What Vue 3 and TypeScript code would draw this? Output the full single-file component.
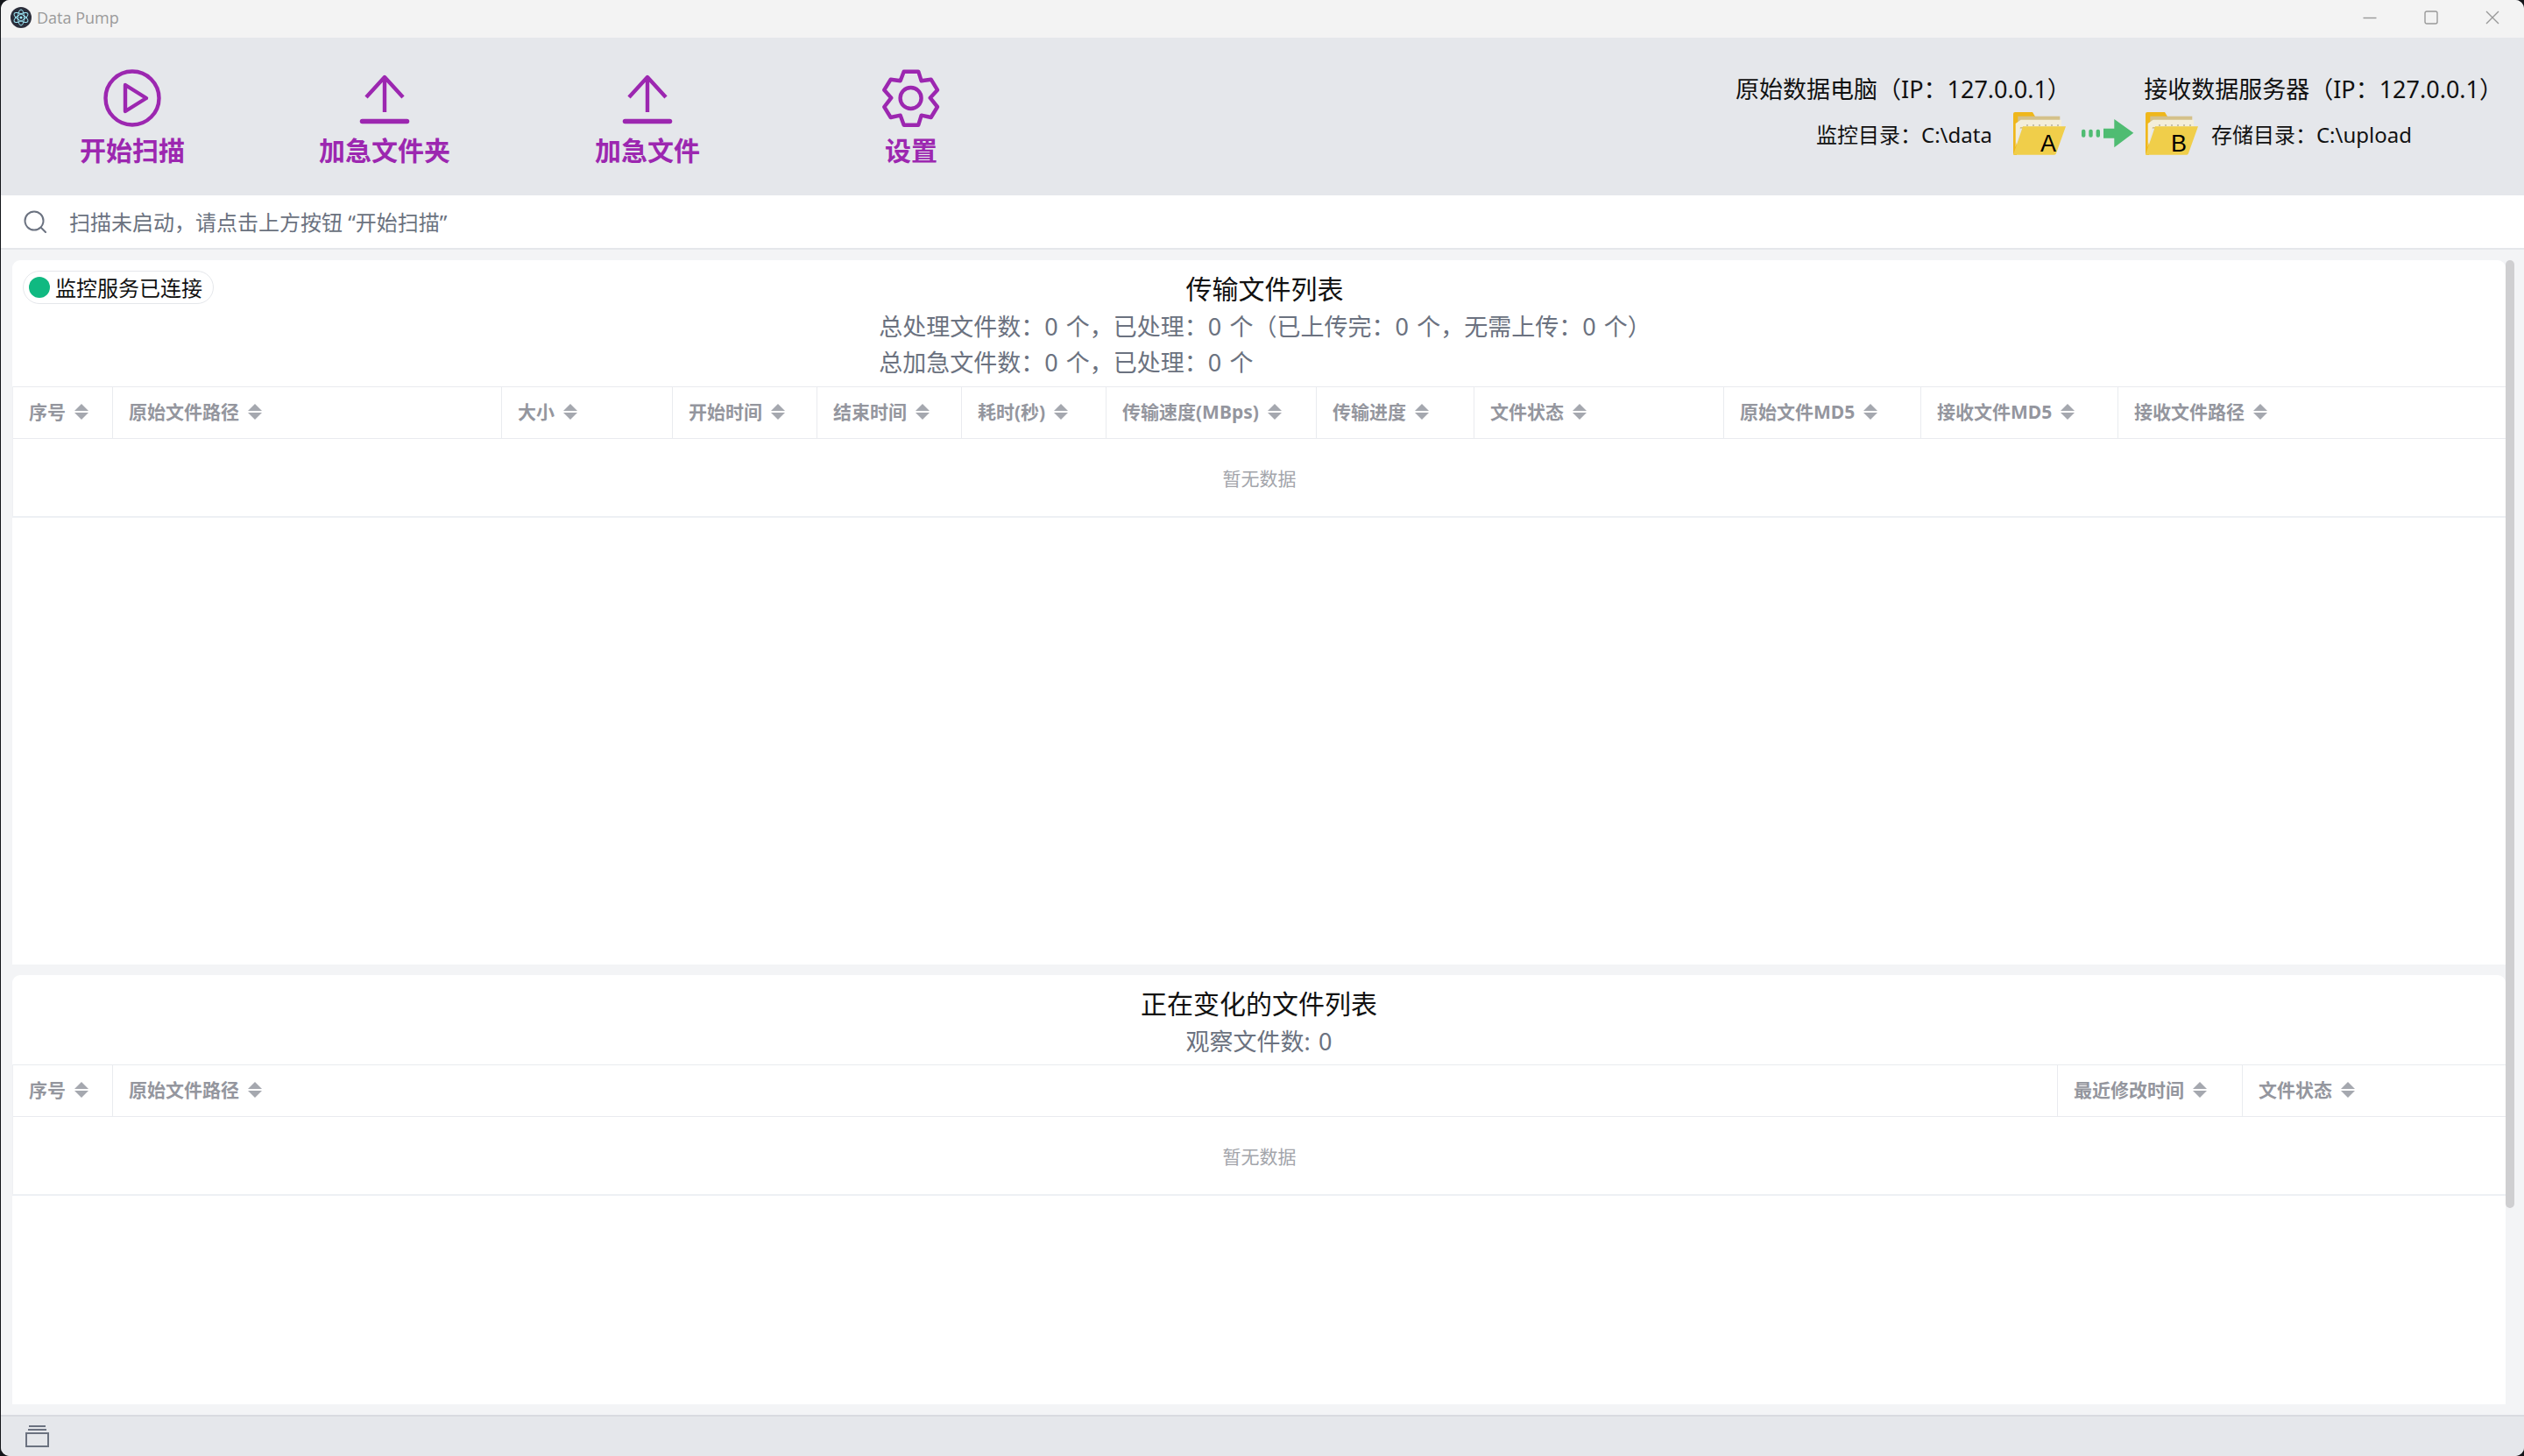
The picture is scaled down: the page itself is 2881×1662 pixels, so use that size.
<script setup lang="ts">
interface Col { label: string; width: number }

const topCols: Col[] = [
  { label: '序号', width: 114 },
  { label: '原始文件路径', width: 444 },
  { label: '大小', width: 195 },
  { label: '开始时间', width: 165 },
  { label: '结束时间', width: 165 },
  { label: '耗时(秒)', width: 165 },
  { label: '传输速度(MBps)', width: 240 },
  { label: '传输进度', width: 180 },
  { label: '文件状态', width: 285 },
  { label: '原始文件MD5', width: 225 },
  { label: '接收文件MD5', width: 225 },
  { label: '接收文件路径', width: 441 }
]

const bottomCols: Col[] = [
  { label: '序号', width: 114 },
  { label: '原始文件路径', width: 2220 },
  { label: '最近修改时间', width: 211 },
  { label: '文件状态', width: 299 }
]

const gearPoints =
  '27.7,5.7 44.3,5.7 47.7,16.3 58.7,14.7 66,26.7 57.7,35.7 66,46 58.7,58 47.7,55.7 44.3,66.7 27.7,66.7 23.7,55.7 12.7,58 5.3,46 13.3,35.7 5.3,26.7 12.7,14.7 23.7,16.3'
</script>

<template>
  <div class="screen">
    <div class="window">
      <header class="titlebar">
        <svg class="logo" viewBox="0 0 24 24">
          <circle cx="12" cy="12" r="12" fill="#2b2e3b" />
          <g fill="none" stroke="#9feaf9" stroke-width="1">
            <ellipse cx="12" cy="12" rx="9" ry="3.6" transform="rotate(30 12 12)" />
            <ellipse cx="12" cy="12" rx="9" ry="3.6" transform="rotate(90 12 12)" />
            <ellipse cx="12" cy="12" rx="9" ry="3.6" transform="rotate(150 12 12)" />
          </g>
          <circle cx="12" cy="12" r="1.6" fill="#9feaf9" />
        </svg>
        <span class="app-name">Data Pump</span>
        <div class="win-controls">
          <svg viewBox="0 0 16 16"><path d="M0.5 8.5H15.5" /></svg>
          <svg viewBox="0 0 16 16"><rect x="1" y="1" width="14" height="14" rx="2" /></svg>
          <svg viewBox="0 0 16 16"><path d="M1 1L15 15M15 1L1 15" /></svg>
        </div>
      </header>

      <section class="toolbar">
        <button class="tool tool-scan">
          <svg class="tool-icon" viewBox="0 0 72 72">
            <circle cx="36" cy="36" r="30.5" />
            <path d="M28 21L52 36L28 51Z" />
          </svg>
          <span>开始扫描</span>
        </button>
        <button class="tool tool-folder">
          <svg class="tool-icon" viewBox="0 0 72 72">
            <path d="M36 52V12M15 35L36 12L57 35" />
            <path class="bar" d="M10.5 62.5H61.5" />
          </svg>
          <span>加急文件夹</span>
        </button>
        <button class="tool tool-file">
          <svg class="tool-icon" viewBox="0 0 72 72">
            <path d="M36 52V12M15 35L36 12L57 35" />
            <path class="bar" d="M10.5 62.5H61.5" />
          </svg>
          <span>加急文件</span>
        </button>
        <button class="tool tool-settings">
          <svg class="tool-icon" viewBox="0 0 72 72">
            <polygon :points="gearPoints" />
            <circle cx="35.6" cy="36" r="12" />
          </svg>
          <span>设置</span>
        </button>

        <div class="route">
          <div class="route-hosts">
            <span>原始数据电脑（IP：127.0.0.1）</span>
            <span>接收数据服务器（IP：127.0.0.1）</span>
          </div>
          <div class="route-paths">
            <span class="path-text">监控目录：C:\data</span>
            <svg class="folder folder-a" viewBox="0 0 60 49">
              <path fill="#efb71b" d="M2 0H22L25 5H27V16H4V49H2Q0 49 0 47V2Q0 0 2 0Z" />
              <rect x="5.3" y="4.7" width="48" height="14" fill="#d4c18a" />
              <path fill="#f3eedb" d="M8.7 8.7H55V17H8L2.7 40V13Z" />
              <path stroke="#b9b39c" stroke-width="1.4" stroke-dasharray="2 5" d="M15 15H52" />
              <path fill="#f0ce4a" d="M11 16.3H60L49 47Q48.5 48.7 47 48.7H0Z" />
              <text x="40" y="45" text-anchor="middle">A</text>
            </svg>
            <svg class="arrow" viewBox="0 0 60 33">
              <rect x="0" y="11.7" width="4.4" height="9" rx="2" />
              <rect x="8.3" y="11.7" width="4.4" height="9" rx="2" />
              <rect x="16.6" y="11.7" width="4.4" height="9" rx="2" />
              <path d="M25 10.7H37.3V0L59.3 15.7L37.3 32.3V21.7H25Z" />
            </svg>
            <svg class="folder folder-b" viewBox="0 0 60 49">
              <path fill="#efb71b" d="M2 0H22L25 5H27V16H4V49H2Q0 49 0 47V2Q0 0 2 0Z" />
              <rect x="5.3" y="4.7" width="48" height="14" fill="#d4c18a" />
              <path fill="#f3eedb" d="M8.7 8.7H55V17H8L2.7 40V13Z" />
              <path stroke="#b9b39c" stroke-width="1.4" stroke-dasharray="2 5" d="M15 15H52" />
              <path fill="#f0ce4a" d="M11 16.3H60L49 47Q48.5 48.7 47 48.7H0Z" />
              <text x="38" y="45" text-anchor="middle">B</text>
            </svg>
            <span class="path-text">存储目录：C:\upload</span>
          </div>
        </div>
      </section>

      <section class="searchbar">
        <svg class="search-icon" viewBox="0 0 26 26">
          <circle cx="12" cy="12" r="10.5" />
          <path d="M20 20L25 25" />
        </svg>
        <span class="search-text">扫描未启动，请点击上方按钮 “开始扫描”</span>
      </section>

      <main class="content">
        <article class="panel panel-top">
          <div class="status-pill"><i class="dot"></i><span class="pill-text">监控服务已连接</span></div>
          <h2 class="panel-title shifted">传输文件列表</h2>
          <div class="stats stats-top">
            <p>总处理文件数：0 个，已处理：0 个（已上传完：0 个，无需上传：0 个）</p>
            <p>总加急文件数：0 个，已处理：0 个</p>
          </div>
          <div class="table">
            <div class="thead">
              <div v-for="col in topCols" :key="col.label" class="th" :style="{ width: col.width + 'px' }">
                <span class="th-label">{{ col.label }}</span>
                <span class="sorter"><i class="up"></i><i class="down"></i></span>
              </div>
            </div>
            <div class="empty">暂无数据</div>
          </div>
        </article>

        <article class="panel panel-bottom">
          <h2 class="panel-title">正在变化的文件列表</h2>
          <div class="stats"><p>观察文件数: 0</p></div>
          <div class="table">
            <div class="thead">
              <div v-for="col in bottomCols" :key="col.label" class="th" :style="{ width: col.width + 'px' }">
                <span class="th-label">{{ col.label }}</span>
                <span class="sorter"><i class="up"></i><i class="down"></i></span>
              </div>
            </div>
            <div class="empty">暂无数据</div>
          </div>
        </article>

        <div class="scroll-thumb"></div>
      </main>

      <footer class="footer">
        <svg class="footer-icon" viewBox="0 0 27 25">
          <path d="M4 1H23M3 5H24" />
          <rect x="1" y="9" width="25" height="15" />
        </svg>
      </footer>
    </div>
  </div>
</template>

<style>
html, body { margin: 0; background: #000; }
</style>

<style scoped>
.screen {
  width: 2881px;
  height: 1662px;
  background: #14161a;
  overflow: hidden;
  font-family: "Noto Sans", "Noto Sans CJK SC", sans-serif;
}
.window {
  margin-left: 1px;
  height: 1662px;
  display: flex;
  flex-direction: column;
  background: #f3f4f6;
  border-radius: 10px;
  overflow: hidden;
}
.titlebar {
  height: 43px;
  flex: none;
  box-sizing: border-box;
  display: flex;
  align-items: center;
  background: #f3f3f3;
  padding: 0 0 3px 11px;
}
.logo { width: 24px; height: 24px; margin-right: 6px; }
.app-name { font: 18px "Open Sans", sans-serif; color: #9a9a9a; }
.win-controls {
  margin-left: auto;
  display: flex;
  gap: 54px;
  padding-right: 28px;
}
.win-controls svg { width: 16px; height: 16px; fill: none; stroke: #999; stroke-width: 1.4; }

.toolbar {
  height: 180px;
  flex: none;
  display: flex;
  align-items: flex-start;
  background: #e5e7eb;
  padding: 33px 24px 0 90px;
  box-sizing: border-box;
}
.tool {
  display: flex;
  flex-direction: column;
  align-items: center;
  gap: 2px;
  border: 0;
  padding: 0;
  background: none;
  font-family: inherit;
  font-size: 30px;
  font-weight: 700;
  line-height: 44px;
  color: #9c27b0;
}
.tool-icon {
  width: 72px;
  height: 72px;
  fill: none;
  stroke: #9c27b0;
  stroke-width: 4.4;
  stroke-linejoin: round;
}
.tool-icon .bar { stroke-width: 5.5; stroke-linecap: round; }
.tool-folder { margin-left: 153px; }
.tool-file { margin-left: 165px; }
.tool-settings { margin-left: 205px; }

.route {
  margin-left: auto;
  width: 876px;
  margin-top: 6px;
  color: #111;
}
.route-hosts {
  display: flex;
  justify-content: space-between;
  font-size: 27px;
  line-height: 40px;
}
.route-paths {
  display: flex;
  justify-content: center;
  align-items: center;
  height: 50px;
  margin-top: 5px;
  padding-right: 12px;
}
.path-text { font-size: 24px; }
.folder { width: 60px; height: 49px; flex: none; overflow: visible; }
.folder text { font: 27px "Liberation Sans", sans-serif; fill: #000; }
.folder-a { margin-left: 24px; }
.folder-b { margin-right: 15px; }
.arrow { width: 60px; height: 33px; flex: none; fill: #4fbc72; margin: 0 13px 0 18px; }

.searchbar {
  height: 62px;
  flex: none;
  box-sizing: border-box;
  display: flex;
  align-items: center;
  background: #fff;
  border-bottom: 2px solid #e5e7eb;
  padding-left: 26px;
  font-size: 24px;
  color: #6b7280;
}
.search-text { margin-top: -2px; }
.search-icon {
  width: 26px;
  height: 26px;
  margin-right: 26px;
  fill: none;
  stroke: #6b7280;
  stroke-width: 2;
  stroke-linecap: round;
}

.content {
  position: relative;
  flex: 1;
  display: flex;
  flex-direction: column;
  gap: 12px;
  padding: 12px 21px 12px 13px;
  min-height: 0;
}
.panel {
  position: relative;
  box-sizing: border-box;
  background: #fff;
  border-radius: 9px 9px 0 0;
  padding-top: 10px;
  text-align: center;
}
.panel-top { height: 804px; flex: none; }
.panel-bottom { flex: 1; }
.panel-title {
  margin: 0 0 1px;
  font-size: 30px;
  line-height: 45px;
  font-weight: 400;
  color: #111;
}
.shifted { padding-left: 13px; }
.stats {
  width: fit-content;
  margin: 0 auto;
  text-align: left;
}
.stats-top { padding-left: 14px; }
.stats p {
  margin: 0;
  font-size: 27px;
  line-height: 40.5px;
  word-spacing: 2.2px;
  color: #6b7280;
}
.status-pill {
  position: absolute;
  left: 12px;
  top: 12px;
  height: 38px;
  box-sizing: border-box;
  padding: 0 12px 0 6px;
  display: flex;
  align-items: center;
  gap: 6px;
  border: 1px solid #e5e7eb;
  border-radius: 19px;
  background: #fff;
  font-size: 24px;
  color: #111;
}
.pill-text { margin-top: -2px; }
.dot { width: 24px; height: 24px; border-radius: 50%; background: #10b981; }

.table { margin-top: 7px; border-left: 1px solid #eef0f3; }
.panel-bottom .table { margin-top: 5px; }
.thead {
  display: flex;
  height: 60px;
  box-sizing: border-box;
  border-top: 1px solid #e9ebef;
  border-bottom: 1px solid #e9ebef;
}
.th {
  flex: none;
  box-sizing: border-box;
  display: flex;
  align-items: center;
  gap: 10px;
  padding: 0 0 2px 18px;
  border-right: 1px solid #e9ebef;
  font-size: 21px;
  font-weight: 700;
  color: #94969e;
}
.th-label { margin-top: -2px; }
.th:last-child { border-right: 0; }
.sorter {
  display: flex;
  flex-direction: column;
  gap: 2px;
}
.sorter i {
  display: block;
  width: 0;
  height: 0;
  border-left: 8px solid transparent;
  border-right: 8px solid transparent;
}
.sorter .up { border-bottom: 8px solid #a5a8af; }
.sorter .down { border-top: 8px solid #a5a8af; }
.empty {
  height: 90px;
  box-sizing: border-box;
  border-bottom: 2px solid #edf0f4;
  display: flex;
  align-items: center;
  justify-content: center;
  font-size: 21px;
  color: #a3a5ab;
}

.scroll-thumb {
  position: absolute;
  right: 11px;
  top: 12px;
  width: 10px;
  height: 1082px;
  border-radius: 5px;
  background: #cfcfd1;
}

.footer {
  height: 47px;
  flex: none;
  box-sizing: border-box;
  display: flex;
  align-items: center;
  background: #e5e7eb;
  border-top: 2px solid #d9dbe0;
  padding-left: 28px;
}
.footer-icon {
  width: 27px;
  height: 25px;
  fill: none;
  stroke: #6b7280;
  stroke-width: 2;
}
</style>
